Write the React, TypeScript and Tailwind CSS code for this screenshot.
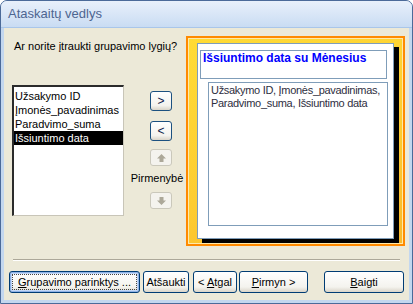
import { ReactNode } from "react";

const font = "font-['Liberation_Sans',Arial,sans-serif]";

function XpButton({ children, w, focused }: { children: ReactNode; w: string; focused?: boolean }) {
    return (
        <button
            className={`${w} h-[22px] rounded-[3px] border border-[#003c74] bg-[linear-gradient(180deg,#ffffff_0%,#f4f3ee_75%,#d9d4c8_100%)] text-[11px] text-black ${focused ? "shadow-[inset_0_0_0_1px_#8fb2e6,inset_0_0_0_2px_#c4d8f6]" : ""} flex items-center justify-center p-[2px]`}
        >
            <span className={`flex h-full w-full items-center justify-center ${focused ? "outline outline-1 outline-dotted outline-[#444] -outline-offset-1" : ""}`}>
                {children}
            </span>
        </button>
    );
}

function ArrowButton({ label }: { label: string }) {
    return (
        <button className="flex h-[20px] w-[22px] items-center justify-center rounded-[3px] border border-[#1c5180] bg-[linear-gradient(180deg,#ffffff_0%,#f4f3ee_75%,#d9d4c8_100%)] text-[12px] leading-none text-[#0a1a4a]">
            {label}
        </button>
    );
}

function DisabledArrow({ down }: { down?: boolean }) {
    return (
        <div className="flex h-[17px] w-[22px] items-center justify-center rounded-[3px] border border-[#cac8bb] bg-[#f4f3ee]">
            <svg width="9" height="8" viewBox="0 0 9 8" className={down ? "rotate-180" : ""}>
                <path d="M4.5 0 L9 4.5 H6.5 V8 H2.5 V4.5 H0 Z" fill="#aca899" />
            </svg>
        </div>
    );
}

export default function App() {
    const fields = ["Užsakymo ID", "Įmonės_pavadinimas", "Paradvimo_suma", "Išsiuntimo data"];
    return (
        <div className={`${font} flex h-[304px] w-[413px] flex-col overflow-hidden rounded-t-[7px] border border-[#4b6a99] bg-[#c3d7ef]`}>
            {/* title bar */}
            <div className="flex h-[27px] shrink-0 items-center border-b border-[#a9c6ea] bg-[linear-gradient(180deg,#e8f0fb_0%,#d9e6f7_50%,#c9dcf3_100%)] pl-[7px]">
                <span className="text-[13px] text-[#4d6591]">Ataskaitų vedlys</span>
            </div>

            {/* body */}
            <div className="mx-[3px] mb-[3px] flex flex-1 flex-col bg-[#ece9d8] text-[11px] text-black">
                <div className="flex pt-[8px]">
                    <div className="flex w-[182px] flex-col pl-[8px]">
                        <div className="mt-[4px] h-[13px] pl-[2px] leading-[13px]">Ar norite įtraukti grupavimo lygių?</div>
                        <div className="mt-[32px] flex">
                            <div className="h-[131px] w-[112px] border-t-2 border-l-2 border-r border-b border-t-[#2b2b2b] border-l-[#2b2b2b] border-r-[#c8c5b8] border-b-[#c8c5b8] bg-white pt-[2px]">
                                {fields.map((f, i) => (
                                    <div
                                        key={f}
                                        className={`h-[14px] pl-[1px] leading-[14px] ${i === fields.length - 1 ? "bg-black text-white" : "text-black"}`}
                                    >
                                        {f}
                                    </div>
                                ))}
                            </div>
                            <div className="ml-[12px] flex w-[50px] flex-col items-center pt-[6px]">
                                <ArrowButton label=">" />
                                <div className="mt-[10px]">
                                    <ArrowButton label="<" />
                                </div>
                                <div className="mt-[8px]">
                                    <DisabledArrow />
                                </div>
                                <div className="mr-[8px] mt-[6px] h-[13px] whitespace-nowrap leading-[13px]">Pirmenybė</div>
                                <div className="mt-[7px]">
                                    <DisabledArrow down />
                                </div>
                            </div>
                        </div>
                    </div>

                    {/* preview */}
                    <div className="h-[210px] w-[219px] border-2 border-[#ff8a00]">
                        <div className="h-full w-full border border-[#ffe9a8] bg-[linear-gradient(160deg,#ffdb35_0%,#fdcc31_60%,#f9b92c_100%)] pl-[8px] pt-[4px]">
                            <div className="h-[196px] w-[197px] border border-[#7f9db9] bg-white pl-[2px] pt-[6px] shadow-[5px_4px_0_#000]">
                                <div className="h-[29px] w-[187px] border border-[#7f9db9] pl-[2px] pt-[1px] text-[12px] font-bold leading-[13px] text-[#0000ff]">
                                    Išsiuntimo data su Mėnesius
                                </div>
                                <div className="ml-[8px] mt-[3px] h-[144px] w-[180px] border border-[#7f9db9] pl-[2px] pt-[1px] leading-[13px] tracking-[-0.3px] text-[#2e2e3e]">
                                    <div className="whitespace-nowrap">Užsakymo ID, Įmonės_pavadinimas,</div>
                                    <div className="whitespace-nowrap">Paradvimo_suma, Išsiuntimo data</div>
                                </div>
                            </div>
                        </div>
                    </div>
                </div>

                <div className="mx-[9px] mt-[13px] h-[2px] border-t border-b border-t-[#aca899] border-b-white" />

                <div className="mt-[10px] flex pl-[5px]">
                    <XpButton w="w-[131px]" focused>
                        <span><u>G</u>rupavimo parinktys ...</span>
                    </XpButton>
                    <div className="ml-[3px]">
                        <XpButton w="w-[46px]">Atšaukti</XpButton>
                    </div>
                    <div className="ml-[4px]">
                        <XpButton w="w-[44px]">
                            <span>&lt; <u>A</u>tgal</span>
                        </XpButton>
                    </div>
                    <div className="ml-[2px]">
                        <XpButton w="w-[69px]">
                            <span><u>P</u>irmyn &gt;</span>
                        </XpButton>
                    </div>
                    <div className="ml-[16px]">
                        <XpButton w="w-[80px]">
                            <span><u>B</u>aigti</span>
                        </XpButton>
                    </div>
                </div>
            </div>
        </div>
    );
}
